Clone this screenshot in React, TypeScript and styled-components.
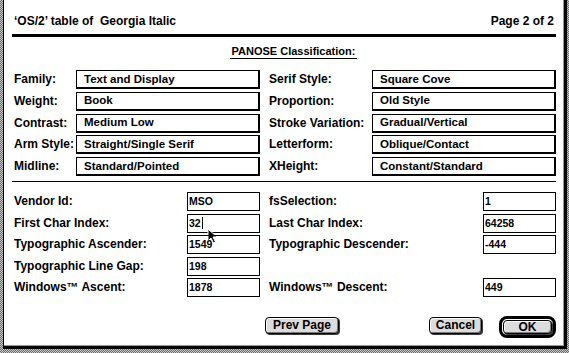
import React from "react";
import styled, { createGlobalStyle } from "styled-components";

const Global = createGlobalStyle`
  html, body { margin: 0; padding: 0; }
  body { background: #9a9a9a; font-family: "Liberation Sans", Arial, sans-serif; }
`;

const Screen = styled.div`
  width: 569px;
  height: 353px;
  overflow: hidden;
  box-sizing: border-box;
  padding-left: 3px;
  background: repeating-conic-gradient(#6a6a6a 0 25%, #c8c8c8 0 50%) 0 0 / 2px 2px;
`;

const Dialog = styled.div`
  width: 564px;
  height: 349px;
  box-sizing: border-box;
  background: #fff;
  border-left: 1px solid #000;
  border-right: 3px solid #000;
  border-bottom: 3px solid #000;
  box-shadow: inset -1px -1px 0 #9a9a9a;
  padding: 0 8px;
  display: flex;
  flex-direction: column;
  color: #000;
  font: bold 12px/13px "Liberation Sans", Arial, sans-serif;
`;

const Header = styled.div`
  height: 34px;
  box-sizing: border-box;
  display: flex;
  justify-content: space-between;
  align-items: flex-end;
  padding: 0 2px 6px;
  white-space: pre;
`;

const ThickRule = styled.div`
  height: 3px;
  background: #000;
`;

const ThinRule = styled.div`
  height: 1px;
  margin-top: 5px;
  background: #000;
`;

const SectionTitle = styled.div`
  margin-top: 8px;
  display: flex;
  justify-content: center;
  padding-left: 19px;
  font-size: 11px;
`;

const Underlined = styled.span`
  display: inline-block;
  padding: 0 2px;
  border-bottom: 1px solid #000;
`;

const PanoseGrid = styled.div`
  margin-top: 11px;
  display: grid;
  grid-template-columns: 64px 184px 112px 184px;
  grid-auto-rows: 19px;
  row-gap: 2.75px;
`;

const FieldGrid = styled.div`
  margin-top: 10px;
  display: grid;
  grid-template-columns: 175px 73px 223px 73px;
  grid-auto-rows: 19px;
  row-gap: 2.5px;
`;

const Label = styled.div<{ $right?: boolean }>`
  display: flex;
  align-items: center;
  padding-left: ${(p) => (p.$right ? "9px" : "2px")};
  white-space: nowrap;
`;

const PanoseBox = styled.div`
  box-sizing: border-box;
  display: flex;
  align-items: center;
  padding-left: 7px;
  border-top: 1px solid #000;
  border-left: 1px solid #000;
  border-right: 2px solid #000;
  border-bottom: 2px solid #000;
  white-space: nowrap;
  font-size: 11.5px;
`;

const EditBox = styled.div`
  position: relative;
  box-sizing: border-box;
  display: flex;
  align-items: center;
  padding-left: 1px;
  border: 1px solid #000;
  font-size: 10.5px;
`;

const Caret = styled.span`
  display: inline-block;
  width: 1px;
  height: 12px;
  margin-left: 1px;
  background: #000;
`;

const Pointer = styled.svg`
  position: absolute;
  left: 19px;
  top: 13px;
  width: 11px;
  height: 16px;
`;

const ButtonRow = styled.div`
  margin-top: 19px;
  display: flex;
  align-items: flex-start;
  padding-left: 253px;
`;

const Button = styled.div<{ $w: number; $h?: number }>`
  box-sizing: border-box;
  width: ${(p) => p.$w}px;
  height: ${(p) => p.$h ?? 17}px;
  margin-top: ${(p) => (p.$h ? 0 : 1)}px;
  display: flex;
  align-items: center;
  justify-content: center;
  border: 1px solid #000;
  border-radius: 4px;
  background: #dcdcdc;
  box-shadow: inset 1px 1px 0 #fff, inset -1px -1px 0 #7a7a7a, 1px 1px 0 #3a3a3a;
  font-size: 12px;
`;

const Spacer = styled.div`
  flex: 1;
`;

const DefaultRing = styled.div`
  margin-left: 17px;
  padding: 1px;
  border: 3px solid #000;
  border-radius: 8px;
`;

const panose: [string, string, string, string][] = [
  ["Family:", "Text and Display", "Serif Style:", "Square Cove"],
  ["Weight:", "Book", "Proportion:", "Old Style"],
  ["Contrast:", "Medium Low", "Stroke Variation:", "Gradual/Vertical"],
  ["Arm Style:", "Straight/Single Serif", "Letterform:", "Oblique/Contact"],
  ["Midline:", "Standard/Pointed", "XHeight:", "Constant/Standard"],
];

const fields: [string, string, string | null, string | null][] = [
  ["Vendor Id:", "MSO", "fsSelection:", "1"],
  ["First Char Index:", "32", "Last Char Index:", "64258"],
  ["Typographic Ascender:", "1549", "Typographic Descender:", "-444"],
  ["Typographic Line Gap:", "198", null, null],
  ["Windows\u2122 Ascent:", "1878", "Windows\u2122 Descent:", "449"],
];

export default function App() {
  return (
    <>
      <Global />
      <Screen>
        <Dialog>
          <Header>
            <span>{"\u2018OS/2\u2019 table of  Georgia Italic"}</span>
            <span>Page 2 of 2</span>
          </Header>
          <ThickRule />
          <SectionTitle>
            <Underlined>PANOSE Classification:</Underlined>
          </SectionTitle>
          <PanoseGrid>
            {panose.map(([l1, v1, l2, v2]) => (
              <React.Fragment key={l1}>
                <Label>{l1}</Label>
                <PanoseBox>{v1}</PanoseBox>
                <Label $right>{l2}</Label>
                <PanoseBox>{v2}</PanoseBox>
              </React.Fragment>
            ))}
          </PanoseGrid>
          <ThinRule />
          <FieldGrid>
            {fields.map(([l1, v1, l2, v2]) => (
              <React.Fragment key={l1}>
                <Label>{l1}</Label>
                <EditBox>
                  {v1}
                  {v1 === "32" && (
                    <>
                      <Caret />
                      <Pointer viewBox="0 0 11 16">
                        <path
                          d="M1 1 L1 13 L4 10 L6.5 15 L8.5 14 L6 9 L10 9 Z"
                          fill="#000"
                          stroke="#fff"
                          strokeWidth="1"
                          strokeLinejoin="miter"
                        />
                      </Pointer>
                    </>
                  )}
                </EditBox>
                {l2 ? <Label $right>{l2}</Label> : <div />}
                {v2 ? <EditBox>{v2}</EditBox> : <div />}
              </React.Fragment>
            ))}
          </FieldGrid>
          <ButtonRow>
            <Button $w={74}>Prev Page</Button>
            <Spacer />
            <Button $w={53}>Cancel</Button>
            <DefaultRing>
              <Button $w={49} $h={14}>OK</Button>
            </DefaultRing>
          </ButtonRow>
        </Dialog>
      </Screen>
    </>
  );
}
